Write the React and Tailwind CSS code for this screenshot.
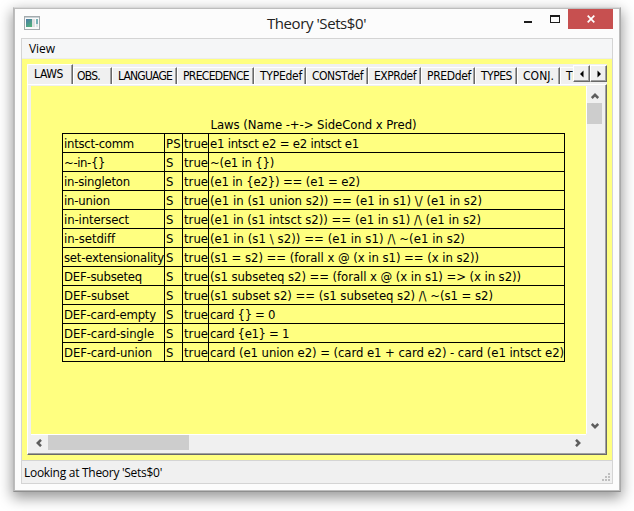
import { useLayoutEffect, useRef, useState } from "react";

// Text run spaced to a fixed advance width.
function Run({ w, className = "", children }) {
  const ref = useRef(null);
  const [ls, setLs] = useState(0);
  useLayoutEffect(() => {
    const natural = ref.current.getBoundingClientRect().width;
    setLs((w - natural) / children.length);
  }, []);
  return (
    <span ref={ref} className={"inline-block whitespace-pre " + className} style={{ letterSpacing: ls + "px" }}>
      {children}
    </span>
  );
}

const tabs = [
  ["OBS.", 23, "w-[39px] pl-[3px]"],
  ["LANGUAGE", 54, "w-[65px] pl-[5px]"],
  ["PRECEDENCE", 66, "w-[77px] pl-[5px]"],
  ["TYPEdef", 42, "w-[52px] pl-[5px]"],
  ["CONSTdef", 51, "w-[62px] pl-[5px]"],
  ["EXPRdef", 42, "w-[53px] pl-[5px]"],
  ["PREDdef", 44, "w-[54px] pl-[5px]"],
  ["TYPES", 31, "w-[42px] pl-[5px]"],
  ["CONJ.", 31, "w-[43px] pl-[5px]"],
  ["TH", 14, "w-[68px] pl-[5px]"],
];

const laws = [
  ["intsct-comm", 70, "PS", "e1 intsct e2 = e2 intsct e1", 149],
  ["~-in-{}", 41, "S", "~(e1 in {})", 64],
  ["in-singleton", 66, "S", "(e1 in {e2}) == (e1 = e2)", 150],
  ["in-union", 46, "S", "(e1 in (s1 union s2)) == (e1 in s1) \\/ (e1 in s2)", 272],
  ["in-intersect", 65, "S", "(e1 in (s1 intsct s2)) == (e1 in s1) /\\ (e1 in s2)", 271],
  ["in-setdiff", 51, "S", "(e1 in (s1 \\ s2)) == (e1 in s1) /\\ ~(e1 in s2)", 255],
  ["set-extensionality", 100, "S", "(s1 = s2) == (forall x @ (x in s1) == (x in s2))", 269],
  ["DEF-subseteq", 78, "S", "(s1 subseteq s2) == (forall x @ (x in s1) => (x in s2))", 311],
  ["DEF-subset", 65, "S", "(s1 subset s2) == (s1 subseteq s2) /\\ ~(s1 = s2)", 283],
  ["DEF-card-empty", 92, "S", "card {} = 0", 65],
  ["DEF-card-single", 90, "S", "card {e1} = 1", 79],
  ["DEF-card-union", 88, "S", "card (e1 union e2) = (card e1 + card e2) - card (e1 intsct e2)", 354],
];

function Chevron({ className }) {
  return (
    <svg viewBox="0 0 8 8" className={"h-2 w-2 " + className}>
      <path d="M0.8 6L4 2.8L7.2 6" fill="none" stroke="#5e5e5e" strokeWidth="2.5" />
    </svg>
  );
}

function SpinButton({ d }) {
  return (
    <div className="flex h-[17px] w-[17px] items-center justify-center border border-t-white border-l-white border-r-[#696969] border-b-[#696969] bg-[#f0f0f0] shadow-[inset_-1px_-1px_0_#a0a0a0]">
      <svg viewBox="0 0 8 8" className="h-2 w-2">
        <path d={d} fill="#000" />
      </svg>
    </div>
  );
}

export default function App() {
  return (
    <div className="h-[511px] w-[634px] overflow-hidden bg-white pt-[7px] pl-[13px] text-black">
      <div className="flex h-[485px] w-[608px] flex-col border border-t-[#d8d8d8] border-r-[#a9a9a9] border-b-[#8f8f8f] border-l-[#b8b8b8] bg-[#fcfcfc] shadow-[0_5px_13px_1px_rgba(0,0,0,0.4)]">
        <div className="flex grow flex-col border border-[#bdbdbd] px-[6px] pb-[6px]">
          {/* title bar */}
          <div className="flex h-[29px] shrink-0">
            <svg viewBox="0 0 16 14" className="mt-[7px] ml-[3px] h-[14px] w-4" shapeRendering="crispEdges">
              <defs>
                <linearGradient id="pic" x1="0" y1="0" x2="0.6" y2="1">
                  <stop offset="0" stopColor="#4a78a8" />
                  <stop offset="1" stopColor="#4fae7c" />
                </linearGradient>
              </defs>
              <rect width="16" height="14" fill="#a3aaad" />
              <rect x="1" y="1" width="14" height="1" fill="#c9d2d6" />
              <rect x="1" y="2" width="14" height="11" fill="#fafafa" />
              <rect x="2" y="3" width="6" height="8" fill="url(#pic)" />
              <rect x="8" y="3" width="3" height="8" fill="#dfe1e2" />
              <rect x="12" y="3" width="2" height="5" fill="#79b3b8" />
              <rect x="12" y="8" width="2" height="3" fill="#dfe9ea" />
            </svg>
            <div className="grow pl-[227px] pt-[3px] font-['Open_Sans',sans-serif] text-[15px] leading-[22px] text-[#222]">
              <Run w={99}>Theory 'Sets$0'</Run>
            </div>
            <div className="mt-[12px] mr-[18px] h-[2px] w-2 bg-[#1c1c1c]" />
            <div className="mt-[6px] mr-[8px] h-2 w-[10px] border border-t-2 border-[#1c1c1c]" />
            <div className="flex h-5 w-[45px] items-center justify-center bg-[#c75050]">
              <svg viewBox="0 0 8 8" className="h-2 w-2">
                <path d="M0.7 0.7L7.3 7.3M7.3 0.7L0.7 7.3" stroke="#fff" strokeWidth="1.7" />
              </svg>
            </div>
          </div>

          <div className="flex w-[592px] grow flex-col border border-[#d4d4d4]">
            <div className="h-5 shrink-0 border-b border-[#ececec] bg-[#f5f6f7] pl-[7px] font-['Open_Sans',sans-serif] text-[12px] leading-[20px]">
              <Run w={26}>View</Run>
            </div>
            <div className="grow bg-[#ffff80] pt-[5px] pl-[5px]">
              {/* notebook */}
              <div className="flex h-[391px] w-[580px] flex-col font-['DejaVu_Sans_Condensed','DejaVu_Sans',sans-serif] [font-stretch:condensed]">
                <div className="flex h-[20px] bg-[#f0f0f0]">
                  <div className="flex w-[546px] items-end overflow-hidden text-[12px] leading-[17px]">
                    <div className="h-[20px] w-[46px] shrink-0 rounded-tl-[2px] border-t border-l border-r border-white border-r-[#696969] bg-[#f0f0f0] pl-[6px] pt-px shadow-[inset_-1px_0_0_#a0a0a0]">
                      <Run w={29}>LAWS</Run>
                    </div>
                    {tabs.map(([t, w, c]) => (
                      <div key={t} className={"h-[17px] shrink-0 border-t border-l border-r border-white border-r-[#696969] bg-[#f0f0f0] shadow-[inset_-1px_0_0_#a0a0a0] " + c}>
                        <Run w={w}>{t}</Run>
                      </div>
                    ))}
                  </div>
                  <div className="flex pt-px">
                    <SpinButton d="M5.5 0.5V7.5L2 4Z" />
                    <SpinButton d="M2.5 0.5V7.5L6 4Z" />
                  </div>
                </div>
                <div className="flex grow flex-col border border-t-white border-l-white border-r-[#696969] border-b-[#696969]">
                  <div className="flex grow flex-col border-r border-b border-[#a0a0a0] bg-[#f0f0f0] pt-px pl-[3px]">
                    <div className="flex h-[348px]">
                      <div className="w-[555px] bg-[#ffff80] pl-[31px] pt-[30px] text-[13px]">
                        <div className="flex h-[17px] w-[503px] justify-center leading-[18px]">
                          <Run w={206}>Laws (Name -+-&gt; SideCond x Pred)</Run>
                        </div>
                        <div className="w-[503px] border-t border-l border-black">
                          {laws.map(([n, nw, k, p, pw]) => (
                            <div key={n} className="flex h-[19px] border-b border-black leading-[19px] *:h-[18px] *:border-r *:border-black *:pl-px">
                              <div className="w-[102px]"><Run w={nw}>{n}</Run></div>
                              <div className="w-[18px]"><Run w={k === "PS" ? 15 : 8}>{k}</Run></div>
                              <div className="w-[26px]"><Run w={24}>true</Run></div>
                              <div className="w-[356px]"><Run w={pw}>{p}</Run></div>
                            </div>
                          ))}
                        </div>
                      </div>
                      <div className="flex w-4 flex-col items-center border-l border-b border-l-white border-b-[#f0f0f0]">
                        <Chevron className="mt-[6px]" />
                        <div className="mt-[3px] h-[21px] w-[15px] bg-[#cdcdcd]" />
                        <Chevron className="mt-auto mb-[3px] rotate-180" />
                      </div>
                    </div>
                    <div className="flex h-4 w-[555px] items-center border-t border-white">
                      <Chevron className="ml-[4px] -rotate-90" />
                      <div className="ml-[5px] h-[15px] w-[141px] bg-[#cdcdcd]" />
                      <Chevron className="mr-[4px] ml-auto rotate-90" />
                    </div>
                  </div>
                </div>
              </div>
            </div>
            <div className="flex h-[23px] shrink-0 justify-between border-t border-[#d4d4d4] bg-[#f0f0f0] pl-[2px] font-['Open_Sans',sans-serif] text-[12px] leading-[23px]">
              <Run w={138}>Looking at Theory 'Sets$0'</Run>
              <svg viewBox="0 0 8 8" className="mt-3 mr-[2px] h-2 w-2" shapeRendering="crispEdges">
                <path d="M6 0h2v2h-2zM3 3h2v2h-2zM6 3h2v2h-2zM0 6h2v2h-2zM3 6h2v2h-2zM6 6h2v2h-2z" fill="#bfbfbf" />
              </svg>
            </div>
          </div>
        </div>
      </div>
    </div>
  );
}
